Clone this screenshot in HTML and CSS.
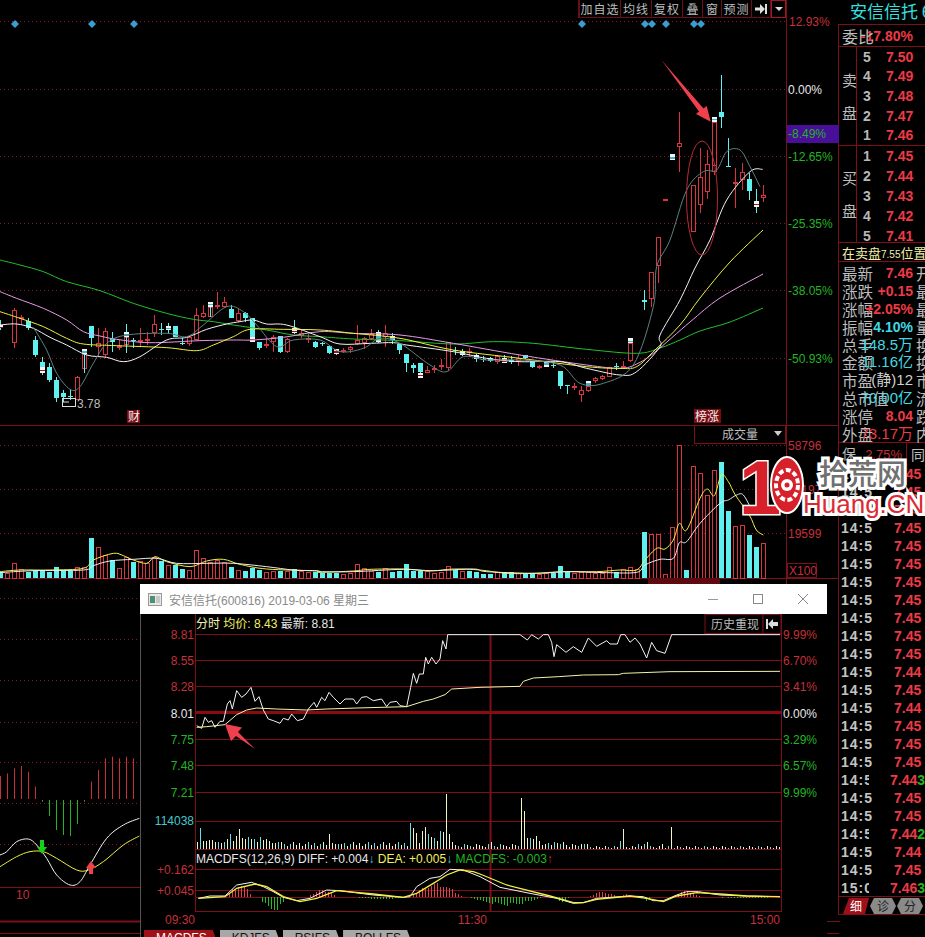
FILE: index.html
```html
<!DOCTYPE html>
<html lang="zh">
<head>
<meta charset="utf-8">
<title>安信信托</title>
<link rel="stylesheet" href="styles.css">
</head>
<body>
<div class="app">
  <main class="charts">
    <nav class="toolbar">
      <span class="tb w42">加自选</span><span class="tb w31">均线</span><span class="tb w31">复权</span><span class="tb w20">叠</span><span class="tb w19">窗</span><span class="tb w30">预测</span>
      <span class="tb w19"><svg class="ic" viewBox="0 0 12 10"><path d="M0 3.5H5V0L10 5L5 10V6.500H0Z" fill="#ddd"/><rect x="10" y="0" width="2" height="10" fill="#ddd"/></svg></span>
      <span class="tb w15 drop"><svg class="ic" viewBox="0 0 8 4"><path d="M0 0H8L4 4Z" fill="#ddd"/></svg></span>
    </nav>
    <svg id="main" class="mainsvg" width="839" height="918" viewBox="0 19 839 918">
      <g id="grid"></g>
      <g id="diamonds"></g>
      <g id="vol"></g>
      <g id="candles"></g>
      <g id="mas"></g>
      <g id="sub"></g>
      <ellipse cx="702" cy="198" rx="15.500" ry="57" class="oval"/>
      <path d="M661.500 60L703.500 108.500L706.700 106L710.700 121.700L696 114L699 111.500Z" fill="#f0404e"/>
      <g class="tags">
        <rect x="127" y="410" width="13" height="13" fill="#7c0a12"/><text x="128" y="421" class="tag">财</text>
        <rect x="694" y="409" width="27" height="14" fill="#7c0a12"/><text x="695" y="421" class="tag">榜涨</text>
        <rect x="62.500" y="398.500" width="13" height="8" fill="none" stroke="#ddd"/><path d="M62.500 402H69" stroke="#ddd"/>
        <text x="77" y="408" class="lb gray">3.78</text>
        <rect x="694.500" y="425.500" width="91" height="18" fill="none" stroke="#7d0f1a"/>
        <text x="722" y="439" class="lb gray">成交量</text><path d="M774 431H782L778 436Z" fill="#ccc"/>
        <rect x="787.500" y="563.500" width="29" height="14" fill="none" stroke="#7d0f1a"/>
        <text x="789" y="575" class="lb dred">X100</text>
        <rect x="648" y="578" width="72" height="6" fill="#5c0a10"/>
      </g>
      <rect x="787" y="125" width="52" height="18" fill="#4a0f98"/>
      <g class="lb">
        <text x="789" y="26" class="dred">12.93%</text>
        <text x="788" y="94" class="white">0.00%</text>
        <text x="788" y="138" class="green">-8.49%</text>
        <text x="788" y="161" class="green">-12.65%</text>
        <text x="788" y="228" class="green">-25.35%</text>
        <text x="788" y="295" class="green">-38.05%</text>
        <text x="788" y="363" class="green">-50.93%</text>
        <text x="788" y="450" class="dred">58796</text>
        <text x="788" y="494" class="dred">39197</text>
        <text x="788" y="538" class="dred">19599</text>
        <text x="16" y="899" class="dred">10</text>
      </g>
    </svg>
  </main>

  <aside class="side">
    <h1 class="title">安信信托 <span>6</span></h1>
    <div class="weibi"><b class="v red">-17.80%</b><span class="k">委比</span></div>
    <section class="book sell">
      <div class="booklabel"><span>卖</span><span>盘</span></div>
      <ol class="levels">
        <li><span>5</span><b>7.50</b></li><li><span>4</span><b>7.49</b></li><li><span>3</span><b>7.48</b></li><li><span>2</span><b>7.47</b></li><li><span>1</span><b>7.46</b></li>
      </ol>
    </section>
    <section class="book buy">
      <div class="booklabel"><span>买</span><span>盘</span></div>
      <ol class="levels">
        <li><span>1</span><b>7.45</b></li><li><span>2</span><b>7.44</b></li><li><span>3</span><b>7.43</b></li><li><span>4</span><b>7.42</b></li><li><span>5</span><b>7.41</b></li>
      </ol>
    </section>
    <div class="position">在卖盘<small>7.55</small>位置</div>
    <dl class="stats">
      <div class="kv"><dt>最新</dt><dd class="red">7.46</dd><dd class="r">开</dd></div>
      <div class="kv"><dt>涨跌</dt><dd class="red">+0.15</dd><dd class="r">最</dd></div>
      <div class="kv"><dt>涨幅</dt><dd class="red">+2.05%</dd><dd class="r">最</dd></div>
      <div class="kv"><dt>振幅</dt><dd class="cy">4.10%</dd><dd class="r">量</dd></div>
      <div class="kv"><dt>总手</dt><dd class="cy thin">148.5万</dd><dd class="r">换</dd></div>
      <div class="kv"><dt>金额</dt><dd class="cy thin">11.16亿</dd><dd class="r">换</dd></div>
      <div class="kv"><dt>市盈</dt><dd class="gy thin">(静)12</dd><dd class="r">市</dd></div>
      <div class="kv"><dt>总市值</dt><dd class="cy thin">70.00亿</dd><dd class="r">流</dd></div>
      <div class="kv"><dt>涨停</dt><dd class="red">8.04</dd><dd class="r">跌</dd></div>
      <div class="kv"><dt>外盘</dt><dd class="red thin">73.17万</dd><dd class="r">内</dd></div>
    </dl>
    <div class="bao"><span class="baol">保&nbsp;<i>2.75%</i></span><span class="baor">同</span></div>
    <ul class="ticks">
      <li><span>14:56</span><b>7.45</b></li><li><span>14:56</span><b>7.45</b></li><li><span>14:56</span><b>7.45</b></li><li><span>14:56</span><b>7.45</b></li><li><span>14:56</span><b>7.45</b></li>
      <li><span>14:56</span><b>7.45</b></li><li><span>14:56</span><b>7.45</b></li><li><span>14:56</span><b>7.45</b></li><li><span>14:56</span><b>7.45</b></li><li><span>14:56</span><b>7.45</b></li>
      <li><span>14:56</span><b>7.45</b></li><li><span>14:56</span><b>7.44</b></li><li><span>14:56</span><b>7.45</b></li><li><span>14:56</span><b>7.44</b></li><li><span>14:56</span><b>7.45</b></li>
      <li><span>14:56</span><b>7.45</b></li><li><span>14:56</span><b>7.45</b></li><li><span>14:56</span><b>7.44<em>3</em></b></li><li><span>14:56</span><b>7.45</b></li><li><span>14:56</span><b>7.45</b></li>
      <li><span>14:56</span><b>7.44<em>2</em></b></li><li><span>14:56</span><b>7.44</b></li><li><span>14:57</span><b>7.45</b></li><li><span>15:00</span><b>7.46<em>3</em></b></li>
    </ul>
    <div class="sidetabs"><span class="st on">细</span><span class="st">诊</span><span class="st">分</span></div>
  </aside>

  <section class="win">
    <header class="wintitle">
      <svg class="appicon" width="14" height="13" viewBox="0 0 14 13"><rect x="0.500" y="0.500" width="13" height="12" fill="#e8e8e8" stroke="#999"/><rect x="2" y="3" width="5" height="7" fill="#4e8f74"/><rect x="8" y="3" width="4" height="7" fill="#c8c8c8"/></svg>
      <span class="wintext">安信信托(600816) 2019-03-06 星期三</span>
      <span class="winbtns">
        <svg width="12" height="12" viewBox="0 0 12 12"><path d="M1 6.500H11" stroke="#999"/></svg>
        <svg width="12" height="12" viewBox="0 0 12 12"><rect x="1.500" y="1.500" width="9" height="9" fill="none" stroke="#888"/></svg>
        <svg width="12" height="12" viewBox="0 0 12 12"><path d="M1 1L11 11M11 1L1 11" stroke="#888"/></svg>
      </span>
    </header>
    <svg id="intra" class="intra" width="687" height="316" viewBox="140 614 687 316">
      <g id="wgrid"></g>
      <g id="wvol"></g>
      <g id="wmacd"></g>
      <g id="wlines"></g>
      <path d="M225 724L242 727.500L238 732L255 749L236 736L231 741Z" fill="#f0404e"/>
      <g class="lb">
        <text x="196" y="628"><tspan class="cream">分时</tspan> <tspan class="yel">均价: 8.43</tspan> <tspan class="white">最新: 8.81</tspan></text>
        <rect x="705" y="614.500" width="58" height="19" fill="#000" stroke="#7d0f1a"/>
        <rect x="763" y="614.500" width="18" height="19" fill="#000" stroke="#7d0f1a"/>
        <text x="711" y="629" class="gray">历史重现</text>
        <path d="M766 619H768V629H766ZM768 624L773 619V622H778V626H773V629Z" fill="#ddd"/>
        <g text-anchor="end">
          <text x="194" y="639" class="dred">8.81</text>
          <text x="194" y="665" class="dred">8.55</text>
          <text x="194" y="691" class="dred">8.28</text>
          <text x="194" y="718" class="white">8.01</text>
          <text x="194" y="744" class="green">7.75</text>
          <text x="194" y="770" class="green">7.48</text>
          <text x="194" y="797" class="green">7.21</text>
          <text x="194" y="825" class="cyan">114038</text>
          <text x="194" y="874" class="dred">+0.162</text>
          <text x="194" y="895" class="dred">+0.045</text>
          <text x="195" y="924" class="dred">09:30</text>
          <text x="487" y="924" class="dred">11:30</text>
          <text x="780" y="924" class="dred">15:00</text>
        </g>
        <text x="783" y="639" class="dred">9.99%</text>
        <text x="783" y="665" class="dred">6.70%</text>
        <text x="783" y="691" class="dred">3.41%</text>
        <text x="783" y="718" class="white">0.00%</text>
        <text x="783" y="744" class="green">3.29%</text>
        <text x="783" y="770" class="green">6.57%</text>
        <text x="783" y="797" class="green">9.99%</text>
        <text x="196" y="863"><tspan class="white">MACDFS(12,26,9) DIFF: +0.004</tspan><tspan class="cyan">↓</tspan><tspan class="yel"> DEA: +0.005</tspan><tspan class="cyan">↓</tspan><tspan class="green"> MACDFS: -0.003</tspan><tspan class="dred">↑</tspan></text>
      </g>
    </svg>
    <div class="wintabs"><span class="wt on">MACDFS</span><span class="wt">KDJFS</span><span class="wt">RSIFS</span><span class="wt">BOLLFS</span></div>
  </section>

  <svg class="logo" width="180" height="72" viewBox="745 452 180 72">
    <text x="739" y="514" class="lg-one">1</text>
    <ellipse cx="787" cy="485" rx="16" ry="28" fill="#d8202a" stroke="#fff" stroke-width="2"/>
    <ellipse cx="787" cy="485" rx="11" ry="15" fill="none" stroke="#fff" stroke-width="4" stroke-dasharray="5 2.500"/>
    <circle cx="787" cy="485" r="6" fill="#fff"/><circle cx="787" cy="485" r="2.500" fill="#d8202a"/>
    <text x="819" y="485" class="lg-cn">拾荒网</text>
    <text x="803" y="513" class="lg-en">Huang.CN</text>
  </svg>
</div>
<script src="chart.js"></script>
</body>
</html>
```
FILE: styles.css
```css
* { box-sizing: border-box; }
html, body { margin: 0; padding: 0; background: #000; }
body { font-family: "Liberation Sans", "Noto Sans CJK SC", sans-serif; }
.app { position: relative; display: grid; grid-template-columns: 839px 86px; width: 925px; height: 937px; overflow: hidden; background: #000; }

.charts { display: flex; flex-direction: column; height: 937px; }
.toolbar { display: flex; justify-content: flex-end; height: 19px; padding-right: 53px; flex: none; }
.tb { display: flex; align-items: center; justify-content: center; height: 18px; border: 1px solid #6a0f18; border-left: 0; border-top: 0; color: #bdbdbd; font-size: 12px; white-space: nowrap; }
.tb:first-child { border-left: 1px solid #6a0f18; }
.w42 { width: 42px; box-shadow: -1px 0 0 #6a0f18; letter-spacing: 1px; }
.w31 { width: 31px; letter-spacing: 1px; }
.w30 { width: 30px; letter-spacing: 1px; }
.w20 { width: 20px; }
.w19 { width: 19px; }
.w15 { width: 15px; }
.drop { border: 1px solid #a01822; }
.ic { width: 12px; height: 10px; }
.drop .ic { width: 8px; height: 4px; }
.mainsvg { display: block; overflow: visible; flex: none; }

.lb, .lb text { font: 12px "Liberation Sans", "Noto Sans CJK SC", sans-serif; }
.dred { fill: #c4303a; }
.white { fill: #e8e8e8; }
.green { fill: #22b522; }
.gray { fill: #bdbdbd; }
.cyan { fill: #45c8d0; }
.yel { fill: #f2f060; }
.cream { fill: #f4f4b8; }
.tag { font: 12px "Noto Sans CJK SC", sans-serif; fill: #eee; }
.oval { fill: none; stroke: #b82838; stroke-width: 1; }

.side { display: flex; flex-direction: column; color: #bdbdbd; height: 937px; overflow: hidden; width: 86px; font-family: "Noto Sans CJK SC", sans-serif; }
.title { margin: 0; height: 24px; padding-left: 11px; font-size: 17px; line-height: 22px; font-weight: 400; color: #35e0e0; white-space: nowrap; overflow: hidden; }
.weibi { display: grid; height: 23px; border-top: 1px solid #7d0f1a; border-bottom: 1px solid #7d0f1a; align-items: center; }
.weibi > * { grid-area: 1 / 1; }
.weibi .k { padding-left: 3px; font-size: 16px; line-height: 20px; }
.weibi .v { font: bold 14px "Liberation Sans", sans-serif; justify-self: end; padding-right: 12px; }
.red { color: #ee3a46; }
.book { display: flex; height: 99px; border-bottom: 1px solid #7d0f1a; }
.buy { height: 97px; }
.sell { height: 99px; }
.booklabel { width: 18px; display: flex; flex-direction: column; justify-content: center; gap: 16px; padding-left: 3px; font-size: 15px; line-height: 17px; border-right: 1px solid #7d0f1a; }
.levels { list-style: none; margin: 0; padding: 0 0 0 6px; flex: 1; display: flex; flex-direction: column; }
.levels li { display: flex; height: 20px; align-items: center; font: bold 14px "Liberation Sans", sans-serif; }
.buy .levels { height: 100px; }
.levels span { width: 23px; color: #b8b8b8; }
.levels b { color: #ee3a46; }
.position { height: 19px; border-bottom: 1px solid #7d0f1a; padding-left: 3px; color: #f2f0a8; font-size: 13px; line-height: 19px; white-space: nowrap; overflow: hidden; }
.position small { font: 10px "Liberation Sans", sans-serif; }
.stats { margin: 0; padding-top: 2px; height: 181px; border-bottom: 1px solid #7d0f1a; }
.kv { display: grid; grid-template-columns: 74px 12px; height: 17.900px; align-items: center; overflow: hidden; }
.kv dt { grid-area: 1 / 1; padding-left: 3px; font-size: 15.500px; line-height: 18px; white-space: nowrap; }
.kv dd { margin: 0; grid-area: 1 / 1; justify-self: end; font: bold 14px/18px "Liberation Sans", "Noto Sans CJK SC", sans-serif; white-space: nowrap; }
.kv .r { grid-area: 1 / 2; justify-self: start; padding-left: 3px; font: 15.500px/18px "Noto Sans CJK SC", sans-serif; color: #bdbdbd; }
.kv .cy { color: #42d8e2; }
.kv .gy { color: #cfcfcf; }
.kv .thin { font-weight: 400; font-size: 15px; }
.bao { display: flex; height: 22px; align-items: center; font-size: 14px; line-height: 20px; }
.baol { width: 69px; padding-left: 3px; border-right: 1px solid #7d0f1a; white-space: nowrap; overflow: hidden; height: 22px; border-bottom: 1px solid #7d0f1a; }
.baol i { font: 13px "Liberation Sans", sans-serif; color: #c4303a; margin-left: 6px; }
.baor { padding-left: 4px; font-size: 14px; }
.ticks { list-style: none; margin: 0; padding: 0; height: 432px; border-bottom: 1px solid #7d0f1a; flex: none; }
.ticks li { display: flex; height: 18px; align-items: center; font: bold 14px "Liberation Sans", sans-serif; }
.ticks span { width: 55px; padding-left: 2px; color: #c4c4c4; letter-spacing: 1px; overflow: hidden; white-space: nowrap; clip-path: inset(0 21px 0 0); }
.ticks b { color: #ee3a46; white-space: nowrap; }
.ticks em { font-style: normal; color: #22b522; }
.sidetabs { display: flex; gap: 1px; padding: 1px 0 0 4px; height: 18px; border-bottom: 1px solid #7d0f1a; flex: none; }
.st { width: 26px; height: 16px; background: #8a8a8a; color: #222; font-size: 12px; line-height: 16px; text-align: center; clip-path: polygon(4px 0, 22px 0, 100% 50%, 22px 100%, 4px 100%, 0 50%); }
.st.on { background: #a01018; color: #fff; clip-path: polygon(6px 0, 100% 0, 22px 100%, 0 100%); }

.win { position: absolute; left: 140px; top: 584px; width: 687px; height: 353px; display: flex; flex-direction: column; background: #000; border-left: 1px solid #555; }
.wintitle { flex: none; height: 30px; display: flex; align-items: center; background: #fff; padding-left: 8px; margin-left: -1px; }
.appicon { flex: none; }
.wintext { margin-left: 7px; color: #8a8a8a; font-size: 12px; white-space: nowrap; }
.winbtns { margin-left: auto; display: flex; gap: 33px; padding-right: 18px; }
.intra { display: block; flex: none; margin-left: -1px; }
.wintabs { display: flex; height: 7px; overflow: hidden; padding-left: 3px; gap: 1px; flex: none; background: #000; }
.wt { height: 16px; padding: 1px 12px 0; background: #a8a8a8; color: #111; font-size: 12px; clip-path: polygon(0 0, calc(100% - 6px) 0, 100% 100%, 0 100%); white-space: nowrap; }
.wt.on { background: #a01018; color: #fff; }

.logo { position: absolute; left: 745px; top: 452px; overflow: visible; }
.lg-one { font: bold 76px "Liberation Sans", sans-serif; fill: #d8202a; stroke: #fff; stroke-width: 3px; paint-order: stroke; }
.lg-cn { font: 500 29px "Noto Sans CJK SC", sans-serif; fill: #707070; stroke: #fff; stroke-width: 6px; paint-order: stroke; }
.lg-en { font: 400 26px "Liberation Sans", sans-serif; fill: #dc2a34; stroke: #fff; stroke-width: 6px; paint-order: stroke; }
```
FILE: chart.js
```js
const NS = 'http://www.w3.org/2000/svg';
const $ = id => document.getElementById(id);
function add(p, tag, a) { const e = document.createElementNS(NS, tag); for (const k in a) e.setAttribute(k, a[k]); p.appendChild(e); return e; }
const z = (ox, oy, arr) => arr.map(([x, y]) => [ox + x / 3, oy + y / 3]);
const LINE = '#7d0f1a', RED = '#d83442', CY = '#5ff0f0';
function hline(p, y, x1, x2, c, w, dash) { const a = { x1, x2, y1: y + .5, y2: y + .5, stroke: c || LINE, 'stroke-width': w || 1 }; if (dash) a['stroke-dasharray'] = dash; return add(p, 'line', a); }
function vline(p, x, y1, y2, c, w) { return add(p, 'line', { x1: x + .5, x2: x + .5, y1, y2, stroke: c || LINE, 'stroke-width': w || 1 }); }
function smooth(p) {
  let d = `M${p[0][0]} ${p[0][1]}`;
  for (let i = 0; i < p.length - 1; i++) {
    const a = p[i - 1] || p[i], b = p[i], c = p[i + 1], e = p[i + 2] || c;
    d += `C${b[0] + (c[0] - a[0]) / 6} ${b[1] + (c[1] - a[1]) / 6} ${c[0] - (e[0] - b[0]) / 6} ${c[1] - (e[1] - b[1]) / 6} ${c[0]} ${c[1]}`;
  }
  return d;
}
function curve(p, pts, c, w) { return add(p, 'path', { d: smooth(pts), fill: 'none', stroke: c, 'stroke-width': w || 1 }); }
function line(p, pts, c, w) { return add(p, 'polyline', { points: pts.map(q => q.join(',')).join(' '), fill: 'none', stroke: c, 'stroke-width': w || 1 }); }

/* main chart grid */
const grid = $('grid');
[21, 89, 156, 223, 290, 358, 445, 489, 533].forEach(y => hline(grid, y, 0, 786, '#8a1620', 1, '1 3'));
[598, 639, 680, 722, 762, 803, 844].forEach(y => hline(grid, y, 0, 140, '#8a1620', 1, '1 3'));
[425, 578].forEach(y => hline(grid, y, 0, 839));
hline(grid, 887, 0, 140); hline(grid, 921, 0, 140, '#7d0f1a', 2); hline(grid, 933, 0, 140);
vline(grid, 786, 0, 937); vline(grid, 838, 24, 915);
hline(grid, 921, 827, 840); hline(grid, 933, 827, 839);

[15, 92, 134, 582, 645, 652, 666, 694, 701].forEach(x => add($('diamonds'), 'path', { d: `M${x} 20L${x + 4} 24L${x} 28L${x - 4} 24Z`, fill: '#3a9fd0' }));

/* candles: [zoomX, high, low, top, bottom, type], zoom coords from three regions */
const A = [[0,210,240,225,235,'wr'],[43,175,295,180,280,'r'],[64,195,225,200,205,'r'],[85,205,240,212,235,'c'],[106,258,322,270,315,'c'],[127,320,375,335,352,'c'],[127,320,375,352,368,'wr'],[148,338,395,350,390,'c'],[169,382,455,390,445,'c'],[190,420,455,428,440,'c'],[211,418,450,438,442,'c'],[232,378,450,380,448,'r'],[253,298,368,312,358,'r'],[253,298,368,298,312,'wc'],[274,228,290,228,265,'c'],[295,235,318,278,290,'r'],[316,235,322,243,315,'r'],[337,245,305,265,275,'c'],[358,270,300,287,292,'r'],[379,222,310,262,285,'r'],[379,222,310,245,262,'wc'],[400,265,295,270,273,'c'],[421,235,290,270,272,'r'],[442,245,285,268,271,'r'],[463,195,262,222,250,'r'],[484,220,255,237,240,'c'],[505,218,252,228,240,'wc'],[526,228,262,228,260,'c'],[547,265,285,278,281,'c'],[568,258,288,260,280,'r'],[589,175,270,195,270,'r'],[610,165,205,190,203,'r'],[631,155,200,170,200,'r'],[631,155,200,155,170,'wc'],[652,125,178,164,167,'r'],[673,140,175,157,173,'r'],[694,165,205,178,205,'c'],[715,175,215,190,215,'r'],[736,185,215,190,205,'c'],[757,205,275,205,260,'c'],[757,205,275,260,275,'wr'],[778,275,300,275,295,'c'],[799,265,295,282,285,'r'],[820,255,305,262,278,'r'],[841,258,310,258,305,'c'],[862,265,310,268,308,'r'],[883,210,252,235,250,'wr'],[904,240,265,248,256,'r'],[925,252,278,265,270,'r'],[946,272,295,275,290,'c']];
const B = [[8,155,168,160,163,'c'],[28,165,192,167,188,'c'],[49,178,194,178,192,'wr'],[70,175,190,181,185,'r'],[91,168,188,172,180,'r'],[112,105,165,150,162,'r'],[133,140,178,145,160,'r'],[154,118,150,132,148,'r'],[175,120,158,125,155,'wc'],[196,105,170,128,140,'r'],[217,128,162,138,150,'wc'],[238,163,192,163,180,'c'],[259,192,245,192,218,'c'],[280,218,248,225,235,'c'],[301,218,248,218,247,'c'],[301,248,263,248,263,'wr'],[322,228,250,240,248,'r'],[343,225,248,235,238,'r'],[364,208,240,224,227,'r'],[385,155,242,155,232,'r'],[406,170,195,180,183,'c'],[427,178,198,182,195,'wc'],[448,175,197,184,187,'r'],[469,193,215,195,207,'wc'],[490,198,215,206,210,'c'],[511,200,215,203,213,'c'],[532,195,222,197,215,'r'],[553,195,218,205,218,'wr'],[574,198,222,209,215,'c'],[595,195,228,205,215,'r'],[616,195,207,195,205,'c'],[637,212,233,213,232,'c'],[658,224,237,228,231,'r'],[679,212,230,212,230,'wc'],[700,218,235,225,228,'c'],[721,243,297,243,287,'c'],[742,285,312,285,288,'c'],[763,278,300,287,291,'r'],[784,288,337,300,315,'r'],[805,272,305,288,303,'r'],[805,272,288,272,288,'wc'],[826,262,278,265,275,'r'],[847,255,270,258,268,'r'],[868,230,262,230,260,'r'],[889,220,240,228,232,'c'],[910,212,235,228,234,'r'],[931,160,215,160,215,'r'],[931,145,160,145,160,'wc']];
const D = [[255,870,930,900,905,'c'],[275,815,920,815,895,'r'],[295,712,850,712,800,'r'],[316,597,600,597,599,'r'],[336,463,480,463,480,'wc'],[358,335,515,430,443,'r'],[400,555,695,555,695,'r'],[421,445,640,532,615,'r'],[442,450,597,492,577,'r'],[463,365,515,365,515,'r'],[463,350,365,350,365,'wc'],[463,495,525,495,515,'r'],[484,225,383,335,350,'c'],[505,415,500,498,501,'c'],[526,505,625,545,552,'r'],[547,490,570,517,540,'r'],[568,520,600,537,572,'c'],[589,568,640,603,620,'wr'],[610,555,605,585,593,'r']];
const all = [];
A.forEach(c => all.push([Math.round(c[0] / 3 / 7) * 7, 250 + c[1] / 3, 250 + c[2] / 3, 250 + c[3] / 3, 250 + c[4] / 3, c[5]]));
B.forEach(c => all.push([Math.round((320 + c[0] / 3) / 7) * 7, 290 + c[1] / 3, 290 + c[2] / 3, 290 + c[3] / 3, 290 + c[4] / 3, c[5]]));
D.forEach(c => all.push([Math.round((560 + c[0] / 3) / 7) * 7, c[1] / 3, c[2] / 3, c[3] / 3, c[4] / 3, c[5]]));
const cg = $('candles');
all.forEach(([x, hi, lo, t, b, k]) => {
  const wick = k === 'r' ? RED : CY;
  add(cg, 'line', { x1: x + .5, x2: x + .5, y1: hi, y2: lo, stroke: wick, 'shape-rendering': 'crispEdges' });
  const h = Math.max(b - t, 1);
  if (k === 'r') add(cg, 'rect', { x: x - 1.5, y: Math.round(t) + .5, width: 4, height: Math.max(Math.round(h) - 1, 1), fill: '#000', stroke: RED, 'shape-rendering': 'crispEdges' });
  else if (k === 'c') add(cg, 'rect', { x: x - 2, y: t, width: 5, height: h, fill: CY, 'shape-rendering': 'crispEdges' });
  else {
    add(cg, 'rect', { x: x - 2, y: t, width: 5, height: h, fill: '#f4f4f4', 'shape-rendering': 'crispEdges' });
    add(cg, 'rect', { x: x - 2, y: t + h * .45, width: 5, height: Math.max(h * .3, 1), fill: k === 'wr' ? '#a01420' : '#38b8c8', 'shape-rendering': 'crispEdges' });
  }
});

/* moving averages */
const ma = $('mas');
const gray = [...z(0, 250, [[100, 232], [140, 300], [170, 370], [210, 418], [240, 410], [280, 340], [320, 280], [380, 255], [500, 250], [560, 260], [610, 225], [680, 170], [730, 185], [770, 225], [830, 290], [880, 270]]), ...z(320, 290, [[0, 150], [60, 185], [130, 175], [180, 145], [240, 160], [330, 225], [380, 245], [430, 200], [500, 210], [600, 210], [720, 225], [780, 280], [850, 280], [940, 225], [1000, 50]]), ...z(560, 0, [[290, 800], [330, 720], [380, 570], [430, 515], [470, 510], [500, 455], [540, 450], [570, 500], [600, 560]])];
const white = [...z(0, 250, [[0, 225], [50, 222], [100, 235], [150, 262], [200, 285], [260, 315], [320, 322], [370, 335], [420, 320], [500, 270], [560, 262], [620, 238], [680, 222], [720, 215], [760, 210], [800, 222], [860, 225]]), ...z(320, 290, [[0, 140], [60, 162], [150, 160], [220, 158], [260, 165], [400, 185], [500, 205], [600, 215], [720, 215], [800, 235], [900, 255], [950, 245], [1020, 170]]), [660, 335], [680, 300], [695, 268], ...z(560, 0, [[450, 720], [500, 600], [570, 515], [608, 508]])];
const yellow = [...z(0, 250, [[0, 185], [60, 205], [130, 230], [200, 265], [250, 282], [350, 287], [500, 293], [590, 302], [640, 285], [700, 260], [750, 238], [850, 238]]), ...z(320, 290, [[0, 120], [100, 130], [240, 145], [400, 180], [600, 205], [800, 230], [900, 235], [950, 230]]), [655, 350], [680, 325], [700, 298], [730, 262], [763, 230]];
const pink = [...z(0, 250, [[0, 125], [50, 145], [130, 175], [200, 210], [250, 245], [300, 258], [350, 268], [450, 278], [600, 272], [700, 270], [760, 270], [850, 262]]), ...z(320, 290, [[0, 125], [100, 130], [240, 135], [400, 160], [600, 195], [800, 225], [900, 235], [950, 222]]), [655, 352], [690, 322], [720, 298], [763, 274]];
const green = [...z(0, 250, [[0, 30], [60, 45], [130, 65], [200, 95], [300, 122], [400, 160], [500, 190], [580, 208], [640, 215], [700, 225], [800, 240], [880, 255]]), ...z(320, 290, [[0, 140], [100, 147], [240, 152], [400, 162], [520, 155], [640, 160], [800, 178], [950, 190]]), [660, 348], [680, 340], [700, 331], [730, 322], [763, 308]];
curve(ma, green, '#22c02c'); curve(ma, pink, '#e89ae8'); curve(ma, yellow, '#f0f040'); curve(ma, white, '#f4f4f4'); curve(ma, gray, '#5f8080');

/* volume: top y and colour per 7px slot */
const vg = $('vol');
const V = {};
const setV = (oy, off, s) => s.split(' ').forEach((t, i) => { V[off + i * 7] = [oy + parseInt(t.slice(1), 10) / 3, t[0]]; });
setV(525, 0, 'c140 r145 r115 r133 c140 c135 c135 c140 c125 c137 c137 r125 r125 c40 r67 r90 c105 r130 r97 c110 r108 r115 r95 c108 r120 c120 c132 r135 r75 r100 r112 r105 r112 c125 r135 c138 c128 c135 r142 r138 c138 r137 c132 r138 r142 c142');
setV(545, 322, 'c85 c85 c85 r88 r85 r58 r70 r78 c80 r68 c80 c77 c57 c77 c77 r78 r85 r80 r62 c75 r78 c77 c80 c87 c87 r82 c82 c80 r83 c83 c83 r87 r85 c83 c63 c82 r85 r82 r82 r85 r83 r65 c80 r72 r65 r73');
setV(400, 644, 'c395 r402 r402 r522 r382 r135 c510 r198 r220 r285 r210 c185 c332 r378 r375 c405 c440 r430');
for (const k in V) {
  const x = +k, [top, c] = V[k];
  if (c === 'c') add(vg, 'rect', { x: x - 2, y: top, width: 5, height: 578 - top, fill: CY, 'shape-rendering': 'crispEdges' });
  else add(vg, 'rect', { x: x - 1.5, y: Math.round(top) + .5, width: 4, height: 578 - Math.round(top), fill: '#000', stroke: RED, 'shape-rendering': 'crispEdges' });
}
curve(ma, [...z(0, 525, [[0, 140], [60, 135], [150, 135], [250, 130], [280, 105], [340, 85], [370, 92], [400, 105], [440, 115], [465, 95], [500, 110], [570, 125], [620, 108], [670, 103], [720, 118], [800, 132], [950, 138]]), ...z(320, 545, [[0, 82], [100, 78], [150, 73], [250, 72], [330, 78], [400, 72], [480, 75], [560, 85], [640, 85], [730, 80], [830, 80], [900, 75]]), ...z(620, 400, [[50, 510], [75, 480], [110, 445], [135, 447], [160, 420], [178, 370], [200, 390], [240, 295], [262, 267], [283, 287], [304, 225], [325, 245], [346, 285], [388, 345], [409, 390], [430, 405]])], '#f0f040');
curve(ma, [...z(0, 525, [[0, 143], [100, 137], [250, 135], [280, 122], [330, 108], [400, 103], [470, 100], [530, 115], [620, 115], [700, 115], [800, 125], [880, 135], [950, 137]]), ...z(320, 545, [[0, 80], [100, 80], [250, 73], [340, 77], [460, 72], [500, 80], [650, 85], [740, 80], [860, 83]]), ...z(620, 400, [[50, 517], [75, 495], [120, 478], [160, 475], [178, 428], [200, 425], [240, 370], [300, 310], [325, 300], [350, 285], [370, 285], [395, 330]])], '#eee');

/* lower-left indicator */
const sg = $('sub');
[[0, 618], [7, 610], [14, 595], [21, 588], [28, 605], [35, 650], [91, 635], [98, 600], [105, 565], [112, 560], [119, 565], [126, 560], [133, 565]].forEach(([x, t]) => vline(sg, x, 570 + t / 3, 799, '#c83038'));
[[42, 695], [49, 738], [56, 780], [63, 795], [70, 798], [77, 762], [84, 695]].forEach(([x, b]) => vline(sg, x, 800, 570 + b / 3, '#22b522'));
curve(sg, z(0, 570, [[0, 855], [20, 845], [50, 815], [85, 807], [110, 825], [140, 865], [170, 915], [210, 945], [240, 935], [270, 885], [320, 805], [370, 765], [418, 745]]), '#f4f4f4');
curve(sg, z(0, 570, [[0, 890], [50, 860], [90, 845], [130, 845], [170, 865], [230, 900], [265, 900], [310, 875], [370, 825], [418, 798]]), '#f0f040');
add(sg, 'path', { d: 'M40 840H44V847H47L42 854L37 847H40Z', fill: '#18d018' });
add(sg, 'path', { d: 'M91 861L96 868H93V874H89V868H86Z', fill: '#f0404e' });

/* intraday window */
const wg = $('wgrid');
[660, 686, 739, 765, 792, 821, 849, 869, 890, 897, 911].forEach(y => hline(wg, y, 195, 782));
hline(wg, 634, 195, 782); hline(wg, 712, 195, 782, '#8c0a10', 3);
vline(wg, 195, 614, 911); vline(wg, 781, 614, 911); vline(wg, 490, 634, 911, '#7d0f1a', 2);
const price = [...z(140, 584, [[170, 425], [185, 433], [195, 400], [205, 415], [215, 410], [225, 430], [240, 412], [250, 412], [262, 360], [270, 350], [277, 375], [290, 320], [305, 340], [318, 330], [333, 310], [345, 352], [357, 338], [370, 378], [385, 405], [400, 410], [420, 418], [430, 403], [445, 408], [455, 390], [472, 410], [490, 405], [505, 375], [522, 355], [530, 370], [545, 340], [555, 350], [567, 325], [580, 340], [600, 360], [615, 345], [640, 345], [650, 360], [665, 340], [680, 338], [700, 350], [725, 345], [740, 368], [750, 355], [770, 352], [780, 365], [800, 368], [812, 310], [820, 268], [830, 298], [838, 270], [850, 270], [857, 220], [865, 240], [875, 220], [888, 240], [900, 225], [908, 170], [918, 195], [923, 152]]), ...z(480, 584, [[120, 152], [142, 168], [155, 152], [175, 165], [190, 152], [205, 152], [215, 175], [222, 218], [230, 182], [258, 205], [280, 188], [305, 205], [325, 162], [350, 187], [380, 170], [390, 180], [412, 180], [422, 152], [435, 152], [450, 175], [465, 162], [480, 180], [500, 222], [515, 175], [530, 200], [555, 208], [575, 152], [900, 152]])];
const avg = [...z(140, 584, [[170, 430], [200, 428], [255, 422], [290, 392], [320, 378], [350, 372], [410, 375], [500, 378], [560, 375], [650, 372], [800, 368], [850, 352], [880, 345], [915, 332], [935, 315]]), ...z(480, 584, [[0, 310], [120, 307], [130, 292], [160, 282], [235, 278], [310, 273], [415, 272], [430, 268], [570, 263], [900, 262]])];

/* window volume */
const wv = $('wvol');
const hs = {};
const setH = (ox, list) => list.forEach(([p, h]) => { hs[Math.round((ox + p / 3 - 197) / 3)] = h / 3; });
setH(140, [[172, 20], [181, 62], [190, 25], [199, 25], [208, 27], [217, 27], [226, 22], [235, 20], [244, 18], [253, 20], [260, 30], [268, 45], [277, 25], [286, 38], [295, 60], [304, 32], [313, 30], [322, 35], [331, 30], [340, 30], [349, 22], [360, 37], [370, 28], [379, 30], [388, 25], [397, 18], [406, 18], [421, 22], [430, 15], [550, 22], [565, 45], [575, 18], [584, 16], [593, 15], [602, 15], [814, 78], [821, 62], [830, 48], [843, 55], [857, 65], [865, 45], [872, 35], [880, 32], [887, 25], [900, 55], [908, 50], [915, 20], [922, 165], [931, 45], [938, 22]]);
setH(480, [[33, 20], [120, 25], [127, 152], [136, 115], [142, 32], [150, 32], [157, 30], [166, 38], [175, 25], [185, 12], [195, 15], [205, 18], [218, 20], [225, 20], [235, 18], [245, 15], [253, 22], [262, 12], [288, 12], [305, 16], [320, 14], [420, 25], [428, 60], [478, 15], [488, 15], [498, 22], [505, 22], [545, 14], [575, 65]]);
for (let i = 0; i < 195; i++) {
  const x = 197 + i * 3;
  const h = hs[i] || (x < 420 ? 3 + (i * 7 % 5) : x < 590 ? 2 + (i * 7 % 4) : 1 + (i * 5 % 3));
  const c = (i * 7 % 5) < 2 || h > 30 ? '#f4f4c0' : (i % 2 ? '#6adce8' : '#f0f0d0');
  add(wv, 'line', { x1: x + .5, x2: x + .5, y1: 849, y2: 849 - h, stroke: c, 'shape-rendering': 'crispEdges' });
}

/* window MACD */
const wm = $('wmacd');
[[226, 253, 12], [259, 287, -13], [307, 337, 7], [353, 407, -2], [410, 463, 13], [468, 543, -8], [553, 570, -5], [587, 617, 5], [620, 630, 3], [643, 650, -5], [672, 700, 6], [710, 780, -1]].forEach(([a, b, peak]) => {
  for (let x = a; x <= b; x += 3) {
    const t = (x - a) / (b - a), v = peak * Math.sin(Math.PI * t) * (.75 + ((x * 7) % 5) * .08);
    add(wm, 'line', { x1: x + .5, x2: x + .5, y1: 897, y2: 897 - v, stroke: peak > 0 ? '#e84048' : '#22c022', 'shape-rendering': 'crispEdges' });
  }
});
const wl = $('wlines');
line(wl, price, '#f4f4f4'); line(wl, avg, '#f4f4a8');
line(wl, [...z(140, 770, [[175, 385], [210, 378], [255, 378], [290, 345], [335, 337], [370, 350], [400, 365], [430, 382], [470, 392], [510, 385], [560, 360], [600, 362], [700, 375], [790, 382], [810, 380], [830, 350], [870, 325], [900, 320], [930, 298], [970, 300]]), ...z(480, 770, [[0, 320], [60, 352], [160, 372], [230, 385], [280, 400], [310, 398], [350, 385], [450, 378], [490, 380], [520, 392], [550, 392], [590, 375], [620, 365], [655, 365], [720, 375], [800, 378], [900, 380]])], '#f4f4f4');
line(wl, [...z(140, 770, [[175, 385], [255, 380], [290, 355], [345, 342], [380, 350], [430, 380], [480, 395], [530, 385], [590, 362], [700, 372], [790, 382], [830, 370], [880, 340], [920, 315], [960, 300], [1000, 305]]), ...z(480, 770, [[0, 312], [80, 345], [210, 378], [280, 398], [310, 398], [350, 388], [450, 378], [500, 385], [550, 395], [590, 378], [650, 368], [720, 372], [800, 378], [900, 380]])], '#f0f040', 1.300);
```
